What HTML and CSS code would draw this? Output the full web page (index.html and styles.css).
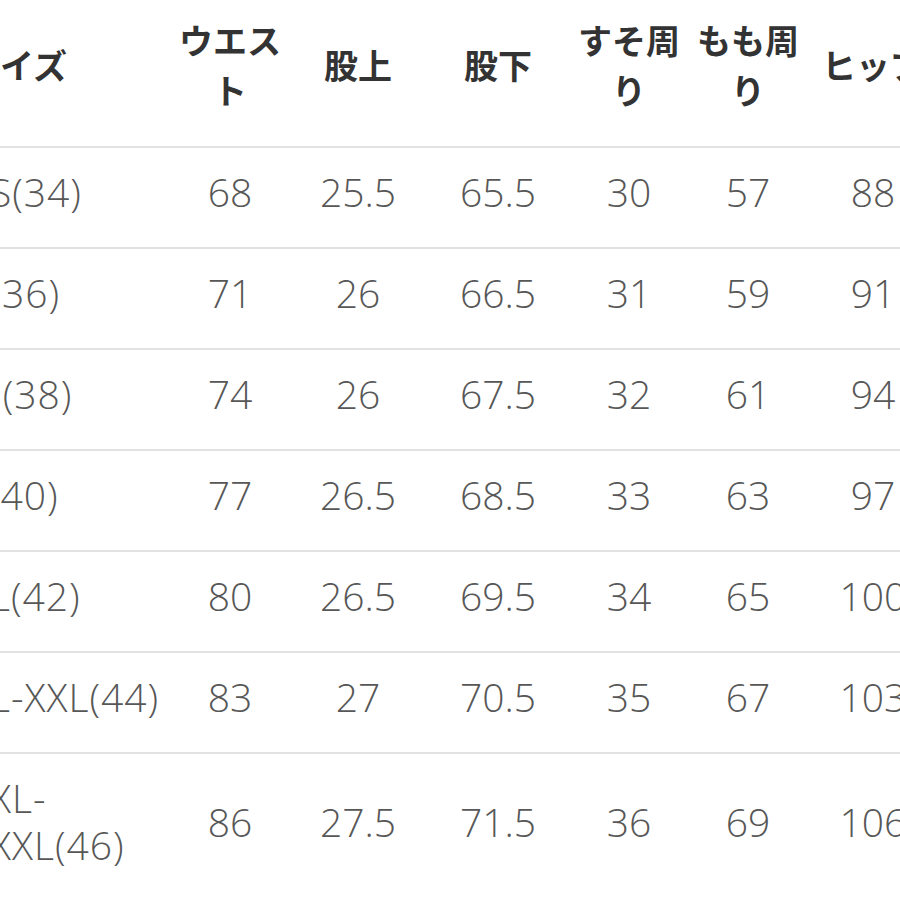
FILE: index.html
```html
<!DOCTYPE html>
<html lang="ja">
<head>
<meta charset="utf-8">
<link rel="stylesheet" href="styles.css">
<title>サイズ表</title>
</head>
<body>
<div class="frame">
  <table class="size-table">
    <colgroup>
      <col class="c-size">
      <col class="c-waist">
      <col class="c-rise">
      <col class="c-inseam">
      <col class="c-hem">
      <col class="c-thigh">
      <col class="c-hip">
    </colgroup>
    <thead>
      <tr>
        <th class="first">サイズ</th>
        <th>ウエスト</th>
        <th>股上</th>
        <th>股下</th>
        <th>すそ周り</th>
        <th>もも周り</th>
        <th>ヒップ</th>
      </tr>
    </thead>
    <tbody>
      <tr><td class="first">XS(34)</td><td>68</td><td>25.5</td><td>65.5</td><td>30</td><td>57</td><td>88</td></tr>
      <tr><td class="first">S(36)</td><td>71</td><td>26</td><td>66.5</td><td>31</td><td>59</td><td>91</td></tr>
      <tr><td class="first">M(38)</td><td>74</td><td>26</td><td>67.5</td><td>32</td><td>61</td><td>94</td></tr>
      <tr><td class="first">L(40)</td><td>77</td><td>26.5</td><td>68.5</td><td>33</td><td>63</td><td>97</td></tr>
      <tr><td class="first">XL(42)</td><td>80</td><td>26.5</td><td>69.5</td><td>34</td><td>65</td><td>100</td></tr>
      <tr><td class="first">XL-XXL(44)</td><td>83</td><td>27</td><td>70.5</td><td>35</td><td>67</td><td>103</td></tr>
      <tr><td class="first">XXL-<br>XXXL(46)</td><td>86</td><td>27.5</td><td>71.5</td><td>36</td><td>69</td><td>106</td></tr>
    </tbody>
  </table>
</div>
</body>
</html>
```

FILE: styles.css
```css
html, body {
  margin: 0;
  padding: 0;
  background: #ffffff;
}

.frame {
  width: 900px;
  height: 900px;
  overflow: hidden;
}

.size-table {
  margin-left: -40px;
  border-collapse: collapse;
  table-layout: fixed;
  width: 978px;
}

.c-size { width: 210px; }
.c-waist { width: 120px; }
.c-rise { width: 136px; }
.c-inseam { width: 144px; }
.c-hem { width: 118px; }
.c-thigh { width: 120px; }
.c-hip { width: 130px; }

.size-table th {
  font-family: "Noto Sans CJK JP", "Noto Sans", sans-serif;
  font-weight: 700;
  font-size: 34px;
  line-height: 50px;
  color: #333333;
  text-align: center;
  vertical-align: middle;
  padding: 15px 6px 31px;
  border-bottom: 2px solid #e2e2e2;
}

.size-table th.first {
  text-align: left;
  padding-left: 6px;
}

.size-table td {
  font-family: "Open Sans", "Noto Sans CJK JP", sans-serif;
  font-weight: 300;
  font-size: 39px;
  line-height: 47px;
  color: #575757;
  text-align: center;
  vertical-align: middle;
  padding: 20px 4px 32px;
  border-bottom: 2px solid #e2e2e2;
  white-space: nowrap;
}

.size-table td.first {
  text-align: left;
  padding-left: 8px;
  letter-spacing: 1px;
}
```
